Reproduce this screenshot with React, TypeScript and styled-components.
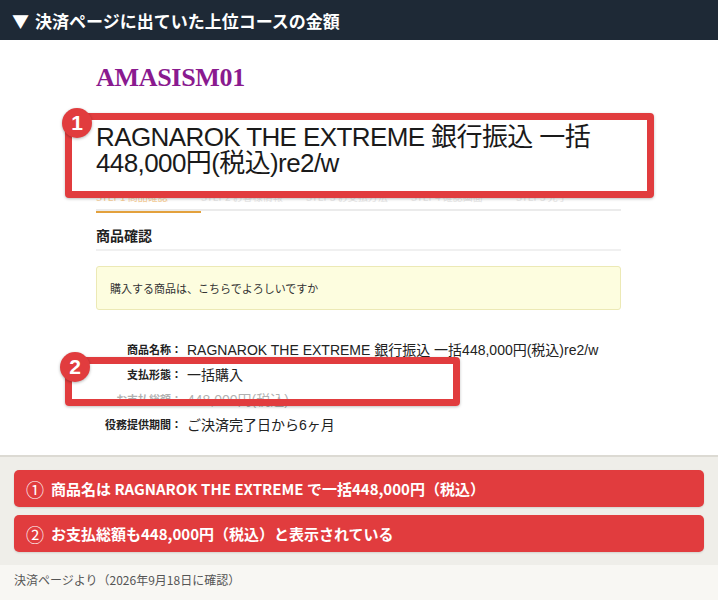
import React from "react";
import styled, { createGlobalStyle } from "styled-components";

const GlobalStyle = createGlobalStyle`
  html, body {
    margin: 0;
    padding: 0;
    background: #ffffff;
    font-family: "Noto Sans CJK JP", "Noto Sans", sans-serif;
  }
`;

const RED = "#e13c3e";

const Page = styled.div`
  width: 718px;
  height: 600px;
  overflow: hidden;
  display: flex;
  flex-direction: column;
`;

const TitleBar = styled.div`
  height: 40px;
  flex-shrink: 0;
  background: #1e2936;
  color: #ffffff;
  display: flex;
  align-items: center;
  padding-left: 12px;
  font-size: 17px;
  font-weight: 700;
  gap: 6px;
`;

const Shot = styled.div`
  position: relative;
  background: #ffffff;
  padding: 24px 0 19px 96px;
  border-bottom: 2px solid #dcdad3;
`;

const Logo = styled.div`
  font-family: "Liberation Serif", serif;
  font-weight: 700;
  font-size: 26px;
  line-height: 28px;
  color: #8a1a8f;
  letter-spacing: -0.3px;
`;

const Tabs = styled.div`
  margin-top: 99px;
  width: 525px;
  display: flex;
  border-bottom: 2px solid #ebebeb;
`;

const Tab = styled.div<{ $active?: boolean }>`
  width: 105px;
  height: 18px;
  font-size: 10px;
  line-height: 12px;
  color: ${(p) => (p.$active ? "#f5cc96" : "#e6e6e6")};
  box-shadow: ${(p) => (p.$active ? "0 2px 0 #e3a13d" : "none")};
  margin-bottom: -2px;
  border-bottom: 2px solid transparent;
`;

const Heading = styled.div`
  margin-top: 14px;
  width: 525px;
  font-size: 14px;
  font-weight: 700;
  line-height: 20px;
  color: #222;
  padding-bottom: 4px;
  border-bottom: 2px solid #f0f0f0;
`;

const Notice = styled.div`
  margin-top: 15px;
  width: 525px;
  height: 44px;
  box-sizing: border-box;
  background: #fdfddf;
  border: 1px solid #ece9b5;
  border-radius: 3px;
  padding-left: 13px;
  display: flex;
  align-items: center;
  font-size: 11px;
  color: #333;
`;

const Rows = styled.div`
  margin-top: 26px;
  display: flex;
  flex-direction: column;
`;

const Row = styled.div<{ $faded?: boolean }>`
  display: flex;
  align-items: center;
  height: 25px;
  opacity: ${(p) => (p.$faded ? 0.35 : 1)};
`;

const Label = styled.div`
  width: 86px;
  text-align: right;
  font-size: 11px;
  font-weight: 700;
  color: #222;
  white-space: nowrap;
`;

const Value = styled.div`
  margin-left: 5px;
  font-size: 14px;
  color: #222;
  white-space: nowrap;
  letter-spacing: 0;
  font-family: "Liberation Sans", "Noto Sans CJK JP", sans-serif;
`;

const Frame = styled.div<{ $left: number; $top: number; $w: number; $h: number; $fill?: boolean }>`
  position: absolute;
  left: ${(p) => p.$left}px;
  top: ${(p) => p.$top}px;
  width: ${(p) => p.$w}px;
  height: ${(p) => p.$h}px;
  box-sizing: border-box;
  border: 7px solid ${RED};
  border-radius: 4px;
  background: ${(p) => (p.$fill ? "#ffffff" : "transparent")};
  box-shadow: 0 1px 3px rgba(0, 0, 0, 0.25);
`;

const CalloutText = styled.div`
  padding: 4px 0 0 24px;
  font-family: "Liberation Sans", "Noto Sans CJK JP", sans-serif;
  font-size: 26px;
  line-height: 26px;
  color: #1a1a1a;
  letter-spacing: -0.6px;
`;

const Badge = styled.div<{ $left: number; $top: number }>`
  position: absolute;
  left: ${(p) => p.$left}px;
  top: ${(p) => p.$top}px;
  width: 30px;
  height: 30px;
  border-radius: 50%;
  background: ${RED};
  color: #fff;
  font-family: "Liberation Sans", sans-serif;
  font-weight: 700;
  font-size: 21px;
  display: flex;
  align-items: center;
  justify-content: center;
  box-shadow: 0 1px 3px rgba(0, 0, 0, 0.3);
`;

const Summary = styled.div`
  background: #efeee9;
  padding: 13px 14px;
  display: flex;
  flex-direction: column;
  gap: 8px;
`;

const Point = styled.div`
  height: 37px;
  background: ${RED};
  border-radius: 5px;
  display: flex;
  align-items: center;
  padding-left: 12px;
  color: #fff;
  font-size: 15px;
  font-weight: 700;
  gap: 7px;
  box-shadow: 0 1px 2px rgba(0, 0, 0, 0.12);
`;

const Num = styled.span`
  font-size: 18px;
  font-weight: 400;
`;

const Source = styled.div`
  flex: 1;
  background: #f8f7f3;
  padding: 6px 14px 0;
  font-size: 12px;
  line-height: 18px;
  color: #555;
`;

export default function App() {
  return (
    <>
      <GlobalStyle />
      <Page>
        <TitleBar>
          <span>▼</span>
          <span>決済ページに出ていた上位コースの金額</span>
        </TitleBar>

        <Shot>
          <Logo>AMASISM01</Logo>
          <Tabs>
            <Tab $active>STEP1 商品確認</Tab>
            <Tab>STEP2 お客様情報</Tab>
            <Tab>STEP3 お支払方法</Tab>
            <Tab>STEP4 確認画面</Tab>
            <Tab>STEP5 完了</Tab>
          </Tabs>
          <Heading>商品確認</Heading>
          <Notice>購入する商品は、こちらでよろしいですか</Notice>
          <Rows>
            <Row>
              <Label>商品名称：</Label>
              <Value>RAGNAROK THE EXTREME 銀行振込 一括448,000円(税込)re2/w</Value>
            </Row>
            <Row>
              <Label>支払形態：</Label>
              <Value>一括購入</Value>
            </Row>
            <Row $faded>
              <Label>お支払総額：</Label>
              <Value>448,000円(税込)</Value>
            </Row>
            <Row>
              <Label>役務提供期間：</Label>
              <Value>ご決済完了日から6ヶ月</Value>
            </Row>
          </Rows>

          <Frame $left={65} $top={73} $w={589} $h={85} $fill>
            <CalloutText>
              RAGNAROK THE EXTREME 銀行振込 一括
              <br />
              448,000円(税込)re2/w
            </CalloutText>
          </Frame>
          <Badge $left={62} $top={68}>1</Badge>

          <Frame $left={65} $top={317} $w={395} $h={49} />
          <Badge $left={60} $top={312}>2</Badge>
        </Shot>

        <Summary>
          <Point>
            <Num>①</Num>
            <span>商品名は RAGNAROK THE EXTREME で一括448,000円（税込）</span>
          </Point>
          <Point>
            <Num>②</Num>
            <span>お支払総額も448,000円（税込）と表示されている</span>
          </Point>
        </Summary>

        <Source>決済ページより（2026年9月18日に確認）</Source>
      </Page>
    </>
  );
}
